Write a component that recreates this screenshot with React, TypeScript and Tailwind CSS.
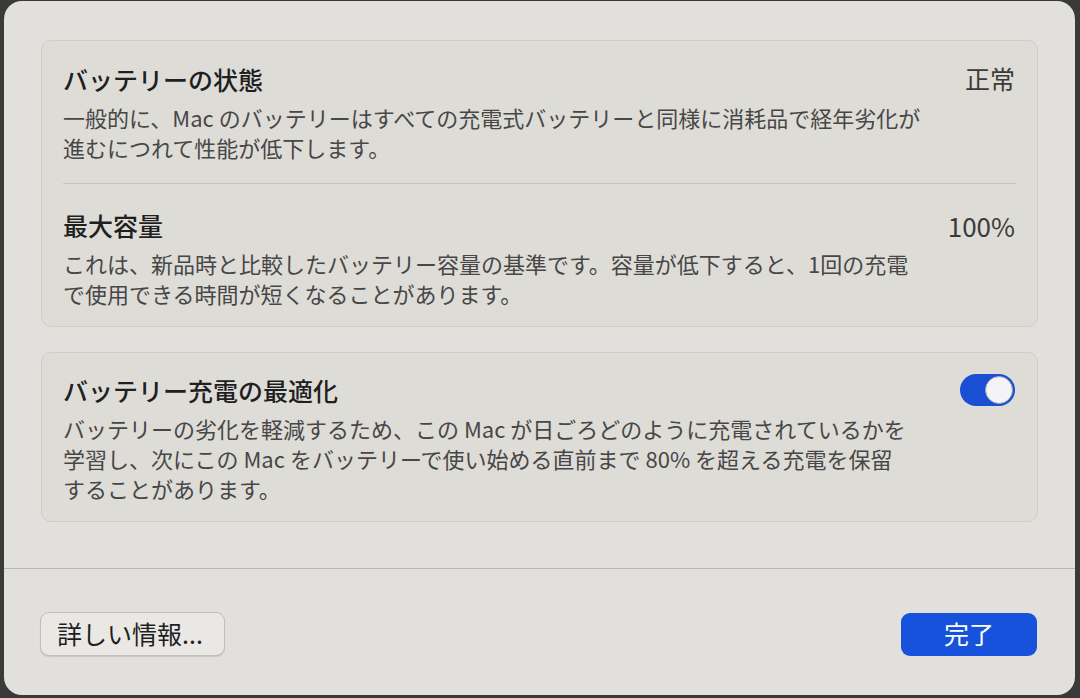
import React from 'react';

const font = { fontFamily: '"Noto Sans CJK JP", "Noto Sans", sans-serif' };

function Toggle() {
    return (
        <div className="flex h-[32px] w-[55px] items-center justify-end rounded-full bg-[#1a4fd3] p-[2px] mt-[-1px]">
            <div className="h-[28px] w-[28px] rounded-full border border-[#9aa3b8] bg-[#f4f4f6]" />
        </div>
    );
}

function Row({ title, lines, right, className }: { title: string; lines: string[]; right: React.ReactNode; className: string }) {
    return (
        <div className={`flex items-start justify-between pl-[21px] pr-[22px] ${className}`}>
            <div>
                <div className="text-[25px] leading-[30px] font-medium text-[#1f1f1f]">{title}</div>
                <div className="mt-[8px] text-[22px] leading-[30px] text-[#474747]">
                    {lines.map((l, i) => (
                        <div key={i} className="whitespace-nowrap">{l}</div>
                    ))}
                </div>
            </div>
            <div className="flex h-[30px] items-center">{right}</div>
        </div>
    );
}

export default function App() {
    return (
        <div className="h-[698px] w-[1080px] bg-[#3a3a3a] pl-[4px] pr-[5px] pt-[1px] pb-[3px]" style={font}>
            <div className="flex h-full flex-col rounded-[18px] bg-[#e2e0dc]">
                <div className="flex flex-col gap-[25px] px-[37px] pt-[39px] pb-[46px]">
                    <div className="rounded-[10px] border border-[#cfccc6] bg-[#dedcd7]">
                        <Row
                            className="pt-[23px] pb-[21px]"
                            title="バッテリーの状態"
                            lines={[
                                '一般的に、Mac のバッテリーはすべての充電式バッテリーと同様に消耗品で経年劣化が',
                                '進むにつれて性能が低下します。',
                            ]}
                            right={<span className="text-[25px] text-[#3a3a3a]">正常</span>}
                        />
                        <div className="mx-[21px] h-px bg-[#c8c5c0]" />
                        <Row
                            className="pt-[26px] pb-[18px]"
                            title="最大容量"
                            lines={[
                                'これは、新品時と比較したバッテリー容量の基準です。容量が低下すると、1回の充電',
                                'で使用できる時間が短くなることがあります。',
                            ]}
                            right={<span className="text-[26px] text-[#3a3a3a]">100%</span>}
                        />
                    </div>
                    <div className="rounded-[10px] border border-[#cfccc6] bg-[#dedcd7]">
                        <Row
                            className="pt-[22px] pb-[18px] pr-[20px]"
                            title="バッテリー充電の最適化"
                            lines={[
                                'バッテリーの劣化を軽減するため、この Mac が日ごろどのように充電されているかを',
                                '学習し、次にこの Mac をバッテリーで使い始める直前まで 80% を超える充電を保留',
                                'することがあります。',
                            ]}
                            right={<Toggle />}
                        />
                    </div>
                </div>
                <div className="h-px bg-[#b9b6b0]" />
                <div className="flex items-center justify-between pl-[36px] pr-[38px] pt-[43px] pb-[39px]">
                    <button className="h-[44px] w-[185px] rounded-[9px] border border-[#c2bfba] bg-[#eae8e4] pl-[16px] text-left text-[25px] text-[#1f1f1f] shadow-[0_1px_1px_rgba(0,0,0,0.12)]">
                        詳しい情報...
                    </button>
                    <button className="h-[43px] w-[136px] rounded-[9px] bg-[#1652db] text-[25px] text-white">
                        完了
                    </button>
                </div>
            </div>
        </div>
    );
}
